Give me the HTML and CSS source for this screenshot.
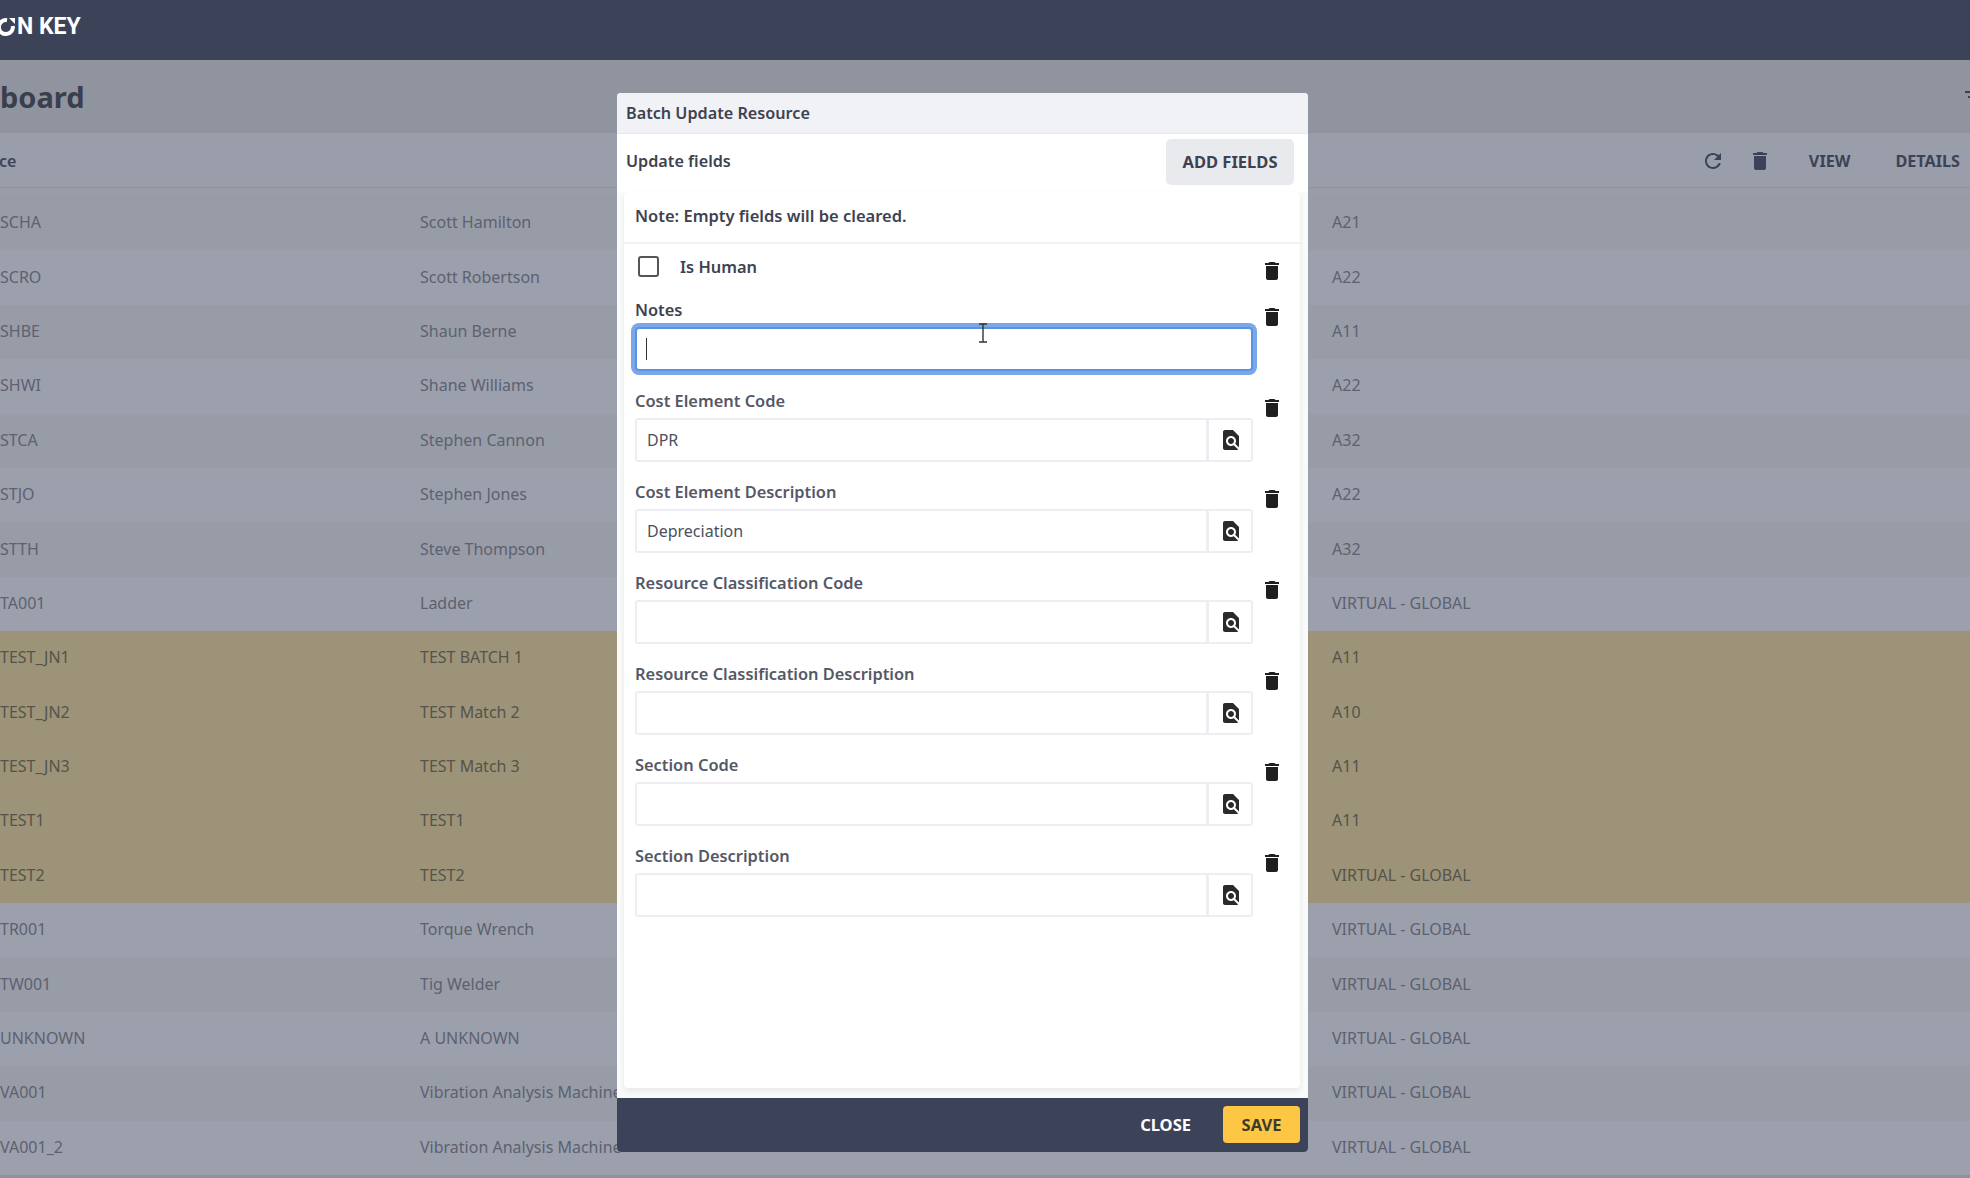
FILE: index.html
```html
<!DOCTYPE html>
<html lang="en">
<head>
    <meta charset="UTF-8">
    <title>Resource Dashboard</title>
    <link rel="stylesheet" href="styles.css">
</head>
<body>
    <svg class="icon-defs" width="0" height="0">
        <symbol id="i-delete" viewBox="0 0 24 24"><path d="M6 19c0 1.1.9 2 2 2h8c1.1 0 2-.9 2-2V7H6v12zM19 4h-3.5l-1-1h-5l-1 1H5v2h14V4z"/></symbol>
        <symbol id="i-find" viewBox="0 0 24 24"><path d="M20 19.59V8l-6-6H6c-1.1 0-1.99.9-1.99 2L4 20c0 1.1.89 2 1.99 2H18c.45 0 .85-.15 1.19-.4l-4.43-4.43c-.8.52-1.74.83-2.76.83-2.76 0-5-2.24-5-5s2.24-5 5-5 5 2.24 5 5c0 1.02-.31 1.96-.83 2.75L20 19.59zM9 13c0 1.66 1.34 3 3 3s3-1.34 3-3-1.34-3-3-3-3 1.34-3 3z"/></symbol>
        <symbol id="i-refresh" viewBox="0 0 24 24"><path d="M17.65 6.35C16.2 4.9 14.21 4 12 4c-4.42 0-7.99 3.58-7.99 8s3.57 8 7.99 8c3.73 0 6.84-2.55 7.73-6h-2.08c-.82 2.33-3.04 4-5.65 4-3.31 0-6-2.69-6-6s2.69-6 6-6c1.66 0 3.14.69 4.22 1.78L13 11h7V4l-2.35 2.35z"/></symbol>
    </svg>

    <header class="topbar">
        <svg class="logo-ring" width="20" height="20" viewBox="0 0 20 20"><path d="M11 3.2A7 7 0 1 0 16.8 9" fill="none" stroke="#fff" stroke-width="4"/><path d="M13 1l6 0 0 6z" fill="#fff"/></svg>
        <span class="logo-text">N KEY</span>
    </header>

    <div class="title-band">
        <h1>board</h1>
        <svg class="filter-icon" width="24" height="24" viewBox="0 0 24 24"><path d="M3 6h18v2H3zM6 11h12v2H6z"/></svg>
    </div>

    <div class="toolbar">
        <span class="toolbar-title">ce</span>
        <div class="toolbar-actions">
            <svg class="tool-icon"><use href="#i-refresh"/></svg>
            <svg class="tool-icon"><use href="#i-delete"/></svg>
            <span class="tool-link view-link">VIEW</span>
            <span class="tool-link">DETAILS</span>
        </div>
    </div>

    <div class="rows">
        <div class="row"><span>SCHA</span><span>Scott Hamilton</span><span>A21</span></div>
        <div class="row"><span>SCRO</span><span>Scott Robertson</span><span>A22</span></div>
        <div class="row"><span>SHBE</span><span>Shaun Berne</span><span>A11</span></div>
        <div class="row"><span>SHWI</span><span>Shane Williams</span><span>A22</span></div>
        <div class="row"><span>STCA</span><span>Stephen Cannon</span><span>A32</span></div>
        <div class="row"><span>STJO</span><span>Stephen Jones</span><span>A22</span></div>
        <div class="row"><span>STTH</span><span>Steve Thompson</span><span>A32</span></div>
        <div class="row"><span>TA001</span><span>Ladder</span><span>VIRTUAL - GLOBAL</span></div>
        <div class="row flagged"><span>TEST_JN1</span><span>TEST BATCH 1</span><span>A11</span></div>
        <div class="row flagged"><span>TEST_JN2</span><span>TEST Match 2</span><span>A10</span></div>
        <div class="row flagged"><span>TEST_JN3</span><span>TEST Match 3</span><span>A11</span></div>
        <div class="row flagged"><span>TEST1</span><span>TEST1</span><span>A11</span></div>
        <div class="row flagged"><span>TEST2</span><span>TEST2</span><span>VIRTUAL - GLOBAL</span></div>
        <div class="row"><span>TR001</span><span>Torque Wrench</span><span>VIRTUAL - GLOBAL</span></div>
        <div class="row"><span>TW001</span><span>Tig Welder</span><span>VIRTUAL - GLOBAL</span></div>
        <div class="row"><span>UNKNOWN</span><span>A UNKNOWN</span><span>VIRTUAL - GLOBAL</span></div>
        <div class="row"><span>VA001</span><span>Vibration Analysis Machine</span><span>VIRTUAL - GLOBAL</span></div>
        <div class="row"><span>VA001_2</span><span>Vibration Analysis Machine</span><span>VIRTUAL - GLOBAL</span></div>
    </div>

    <div class="modal">
        <div class="modal-head">Batch Update Resource</div>
        <div class="modal-sub">
            <span>Update fields</span>
            <button class="add-btn">ADD FIELDS</button>
        </div>
        <div class="card">
            <div class="note">Note: Empty fields will be cleared.</div>

            <div class="field check-field">
                <div class="field-main check-line">
                    <span class="checkbox"></span>
                    <span class="check-label">Is Human</span>
                </div>
                <svg class="del-icon"><use href="#i-delete"/></svg>
            </div>

            <div class="field">
                <div class="field-main">
                    <label class="dark">Notes</label>
                    <div class="input focused"><span class="caret"></span></div>
                </div>
                <svg class="del-icon"><use href="#i-delete"/></svg>
            </div>

            <div class="field">
                <div class="field-main">
                    <label>Cost Element Code</label>
                    <div class="input"><span class="value">DPR</span><span class="addon"><svg class="find-icon"><use href="#i-find"/></svg></span></div>
                </div>
                <svg class="del-icon"><use href="#i-delete"/></svg>
            </div>

            <div class="field">
                <div class="field-main">
                    <label>Cost Element Description</label>
                    <div class="input"><span class="value">Depreciation</span><span class="addon"><svg class="find-icon"><use href="#i-find"/></svg></span></div>
                </div>
                <svg class="del-icon"><use href="#i-delete"/></svg>
            </div>

            <div class="field">
                <div class="field-main">
                    <label>Resource Classification Code</label>
                    <div class="input"><span class="value"></span><span class="addon"><svg class="find-icon"><use href="#i-find"/></svg></span></div>
                </div>
                <svg class="del-icon"><use href="#i-delete"/></svg>
            </div>

            <div class="field">
                <div class="field-main">
                    <label>Resource Classification Description</label>
                    <div class="input"><span class="value"></span><span class="addon"><svg class="find-icon"><use href="#i-find"/></svg></span></div>
                </div>
                <svg class="del-icon"><use href="#i-delete"/></svg>
            </div>

            <div class="field">
                <div class="field-main">
                    <label>Section Code</label>
                    <div class="input"><span class="value"></span><span class="addon"><svg class="find-icon"><use href="#i-find"/></svg></span></div>
                </div>
                <svg class="del-icon"><use href="#i-delete"/></svg>
            </div>

            <div class="field">
                <div class="field-main">
                    <label>Section Description</label>
                    <div class="input"><span class="value"></span><span class="addon"><svg class="find-icon"><use href="#i-find"/></svg></span></div>
                </div>
                <svg class="del-icon"><use href="#i-delete"/></svg>
            </div>
        </div>
        <div class="modal-foot">
            <button class="close-btn">CLOSE</button>
            <button class="save-btn">SAVE</button>
        </div>
        <svg class="ibeam" width="10" height="20" viewBox="0 0 10 20"><path d="M1 1h8M5 1v18M1 19h8" fill="none" stroke="#333" stroke-width="1.4"/></svg>
    </div>
</body>
</html>
```

FILE: styles.css
```css
* {
    box-sizing: border-box;
}
body {
    margin: 0;
    width: 1970px;
    height: 1178px;
    overflow: hidden;
    position: relative;
    background-color: #8f929d;
    font-family: 'Noto Sans', sans-serif;
    font-size: 16px;
    color: #5d6170;
}
.icon-defs {
    position: absolute;
}
.topbar {
    height: 60px;
    background-color: #3c4358;
    display: flex;
    align-items: center;
    padding-bottom: 7px;
    margin-left: -4px;
}
.logo-text {
    color: #fff;
    font-family: 'Roboto', sans-serif;
    font-weight: 700;
    font-size: 23px;
    margin-left: 1px;
}
.title-band {
    height: 73px;
    background-color: #90949f;
    display: flex;
    align-items: center;
    justify-content: space-between;
}
.title-band h1 {
    margin: 0;
    font-size: 29px;
    font-weight: 700;
    color: #3a3f4e;
}
.filter-icon {
    fill: #3a3f4e;
    margin-right: -16px;
}
.toolbar {
    height: 55px;
    background-color: #9a9eaa;
    border-bottom: 1px solid #8f939f;
    display: flex;
    align-items: center;
    justify-content: space-between;
    padding: 2px 10px 0 0;
}
.toolbar-title {
    font-weight: 600;
    color: #3c4358;
    font-size: 16px;
    margin-left: -1px;
}
.toolbar-actions {
    display: flex;
    align-items: center;
    gap: 23px;
}
.tool-icon {
    width: 24px;
    height: 24px;
    fill: #3c4358;
}
.tool-link {
    font-weight: 700;
    font-size: 16.2px;
    color: #3c4358;
}
.view-link {
    margin: 0 22px 0 14px;
}
.rows {
    padding-top: 8px;
    background-color: #999da8;
}
.row {
    display: grid;
    grid-template-columns: 420px 912px 1fr;
    align-items: center;
    height: 54.4px;
    padding-bottom: 2px;
    background-color: #9ca0ac;
    white-space: nowrap;
}
.row:nth-child(odd) {
    background-color: #989ca7;
}
.row.flagged,
.row.flagged:nth-child(odd) {
    background-color: #9c9378;
    color: #55534a;
}

/* dialog */
.modal {
    position: absolute;
    left: 617px;
    top: 93px;
    width: 691px;
    height: 1059px;
    display: flex;
    flex-direction: column;
    background-color: #fafafb;
    border-radius: 4px;
    overflow: hidden;
    color: #4b4f5c;
}
.modal-head {
    height: 41px;
    flex: none;
    background-color: #f1f2f5;
    border-bottom: 1px solid #e8e9ed;
    display: flex;
    align-items: center;
    padding-left: 9px;
    font-weight: 600;
    font-size: 16.2px;
    color: #3e4250;
}
.modal-sub {
    height: 58px;
    flex: none;
    background-color: #fff;
    display: flex;
    align-items: center;
    justify-content: space-between;
    padding: 0 14px 4px 9px;
    font-weight: 600;
    font-size: 16.2px;
    color: #3e4250;
}
.add-btn {
    width: 128px;
    height: 46px;
    border: none;
    border-radius: 5px;
    background-color: #e9eaee;
    font-family: inherit;
    font-weight: 700;
    font-size: 16.5px;
    color: #3e4250;
    margin-top: 1px;
}
.card {
    flex: 1;
    margin: 0 8px 10px 7px;
    padding: 0 0 0 11px;
    background-color: #fff;
    border-radius: 4px;
    box-shadow: 0 3px 6px rgba(0, 0, 0, 0.08);
}
.note {
    height: 52px;
    margin-left: -11px;
    padding: 12px 0 0 11px;
    border-bottom: 2px solid #f1f2f4;
    font-weight: 600;
    font-size: 16.5px;
    color: #3e4250;
}
.field {
    display: flex;
    gap: 7px;
    margin-bottom: 16px;
}
.field-main {
    width: 618px;
    flex: none;
}
.del-icon {
    width: 24px;
    height: 24px;
    flex: none;
    margin-top: 9px;
    fill: #1f1f1f;
}
.check-field {
    height: 52px;
    margin-bottom: 0;
    padding-top: 10px;
}
.check-field .del-icon {
    margin-top: 5px;
}
.check-line {
    display: flex;
    align-items: center;
    height: 24px;
}
.checkbox {
    width: 21px;
    height: 21px;
    margin-left: 3px;
    border: 2px solid #555;
    border-radius: 3px;
}
.check-label {
    margin-left: 21px;
    font-weight: 600;
    font-size: 16.4px;
    color: #3e4250;
}
label {
    display: block;
    height: 26px;
    margin-bottom: 5px;
    line-height: 27px;
    font-weight: 600;
    font-size: 16.4px;
    color: #555866;
}
label.dark {
    color: #3e4250;
}
.input {
    display: flex;
    align-items: center;
    height: 44px;
    border: 2px solid #eeeef2;
    border-radius: 3px;
    background-color: #fff;
    font-size: 16px;
    color: #4b4f5c;
}
.input.focused {
    border: 2px solid #5b93e3;
    box-shadow: 0 0 0 4px #7aa7e6;
    border-radius: 4px;
    padding-left: 9px;
}
.caret {
    width: 1px;
    height: 22px;
    background-color: #333;
}
.value {
    flex: 1;
    padding-left: 10px;
}
.addon {
    width: 45px;
    height: 100%;
    padding-left: 2px;
    border-left: 3px solid #eeeef2;
    display: flex;
    align-items: center;
    justify-content: center;
}
.find-icon {
    width: 24px;
    height: 24px;
    fill: #2a2a2a;
}
.modal-foot {
    height: 54px;
    flex: none;
    background-color: #3c4358;
    display: flex;
    align-items: center;
    justify-content: flex-end;
    padding: 0 8px 2px 0;
}
.close-btn {
    border: none;
    background: none;
    padding: 0;
    margin-right: 32px;
    font-family: inherit;
    font-weight: 700;
    font-size: 16.5px;
    color: #fff;
}
.save-btn {
    width: 77px;
    height: 37px;
    border: none;
    border-radius: 4px;
    background-color: #fdc745;
    font-family: inherit;
    font-weight: 700;
    font-size: 16.5px;
    color: #3d3a2e;
}
.ibeam {
    position: absolute;
    left: 361px;
    top: 230px;
}
```
